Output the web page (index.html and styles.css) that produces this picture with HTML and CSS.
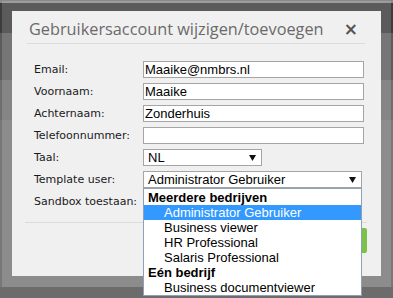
FILE: index.html
```html
<!DOCTYPE html>
<html lang="nl">
<head>
    <meta charset="UTF-8">
    <title>Gebruikersaccount wijzigen/toevoegen</title>
    <link rel="stylesheet" href="styles.css">
</head>
<body>

    <div class="frame">
        <div class="dialog">
            <div class="dialog-header">
                <h2 class="dialog-title">Gebruikersaccount wijzigen/toevoegen</h2>
                <span class="close">&times;</span>
            </div>

            <div class="form">
                <div class="row">
                    <label>Email:</label>
                    <input class="field" type="text" value="Maaike@nmbrs.nl">
                </div>
                <div class="row">
                    <label>Voornaam:</label>
                    <input class="field" type="text" value="Maaike">
                </div>
                <div class="row">
                    <label>Achternaam:</label>
                    <input class="field" type="text" value="Zonderhuis">
                </div>
                <div class="row">
                    <label>Telefoonnummer:</label>
                    <input class="field" type="text" value="">
                </div>
                <div class="row">
                    <label>Taal:</label>
                    <div class="select select-small">
                        <span>NL</span>
                        <svg class="arrow" width="7" height="6" viewBox="0 0 7 6"><path d="M0 0h7L3.5 6z" fill="#111"/></svg>
                    </div>
                </div>
                <div class="row">
                    <label>Template user:</label>
                    <div class="select-wrap">
                        <div class="select select-wide">
                            <span>Administrator Gebruiker</span>
                            <svg class="arrow" width="7" height="6" viewBox="0 0 7 6"><path d="M0 0h7L3.5 6z" fill="#111"/></svg>
                        </div>
                        <ul class="options">
                            <li class="group">Meerdere bedrijven</li>
                            <li class="selected">Administrator Gebruiker</li>
                            <li>Business viewer</li>
                            <li>HR Professional</li>
                            <li>Salaris Professional</li>
                            <li class="group">Eén bedrijf</li>
                            <li>Business documentviewer</li>
                        </ul>
                    </div>
                </div>
                <div class="row">
                    <label>Sandbox toestaan:</label>
                    <input type="checkbox">
                </div>
            </div>

            <div class="dialog-footer">
                <button class="save">Opslaan</button>
            </div>
        </div>
    </div>

</body>
</html>
```

FILE: styles.css
```css
body {
    margin: 0;
    height: 298px;
    overflow: hidden;
    font-family: "DejaVu Sans", Verdana, sans-serif;
    background: linear-gradient(to bottom,
        #8a8a8a 0, #8a8a8a 3px,
        #3c3c3c 3px, #3c3c3c 33px,
        #5c5c5c 33px, #5c5c5c 80px,
        #6e6e6e 80px, #6e6e6e 120px,
        #777777 120px, #777777 287px,
        #6c6c6c 287px);
}

.frame {
    margin: 1px 2px 0 2px;
    padding: 10px 10px 11px 10px;
    background-color: rgba(255, 255, 255, 0.16);
}

.dialog {
    background-color: #f0f0f0;
    height: 265px;
}

.dialog-header {
    margin: 0 16px 0 15px;
    height: 32px;
    border-bottom: 1px solid #dcdcdc;
    display: flex;
    align-items: flex-start;
    justify-content: space-between;
}

.dialog-title {
    margin: 7px 0 0 2px;
    font-family: "Open Sans", sans-serif;
    font-weight: normal;
    font-size: 16.3px;
    line-height: 22px;
    color: #6a6a6a;
}

.close {
    margin: 8px 7px 0 0;
    font-family: "DejaVu Sans", sans-serif;
    font-weight: bold;
    font-size: 17px;
    line-height: 20px;
    color: #555;
}

.form {
    padding: 17px 0 0 22px;
    display: flex;
    flex-direction: column;
    gap: 5px;
}

.row {
    display: flex;
    align-items: center;
    height: 17px;
}

label {
    width: 109px;
    font-size: 11px;
    color: #1a1a1a;
}

.field {
    box-sizing: border-box;
    width: 221px;
    height: 17px;
    margin: 0;
    padding: 0 1px;
    border: 1px solid #a5a5a5;
    background-color: #fff;
    font-family: "Liberation Sans", Arial, sans-serif;
    font-size: 13px;
    color: #000;
}

.select {
    box-sizing: border-box;
    height: 17px;
    padding: 0 5px 0 4px;
    border: 1px solid #a5a5a5;
    background-color: #fff;
    display: flex;
    align-items: center;
    justify-content: space-between;
    font-family: "Liberation Sans", Arial, sans-serif;
    font-size: 13px;
    color: #000;
}

.select-small {
    width: 119px;
}

.select-wide {
    width: 219px;
}

.select-wrap {
    position: relative;
}

.options {
    position: absolute;
    top: 17px;
    left: 0;
    z-index: 2;
    box-sizing: border-box;
    width: 219px;
    margin: 0;
    padding: 1px 0 0 0;
    list-style: none;
    background-color: #fff;
    border: 1px solid #8ea0b8;
    font-family: "Liberation Sans", Arial, sans-serif;
    font-size: 13px;
    color: #000;
}

.options li {
    height: 15px;
    line-height: 15px;
    padding-left: 20px;
}

.options .group {
    padding-left: 4px;
    font-weight: bold;
}

.options .selected {
    background-color: #3399ff;
    color: #fff;
}

input[type="checkbox"] {
    margin: 0;
}

.dialog-footer {
    margin: 12px 14px 0 13px;
    padding-top: 5px;
    border-top: 1px solid #dcdcdc;
    display: flex;
    justify-content: flex-end;
}

.save {
    width: 80px;
    height: 25px;
    border: none;
    border-radius: 2px;
    background-color: #7cc14a;
    color: #fff;
    font-size: 12px;
}
```
